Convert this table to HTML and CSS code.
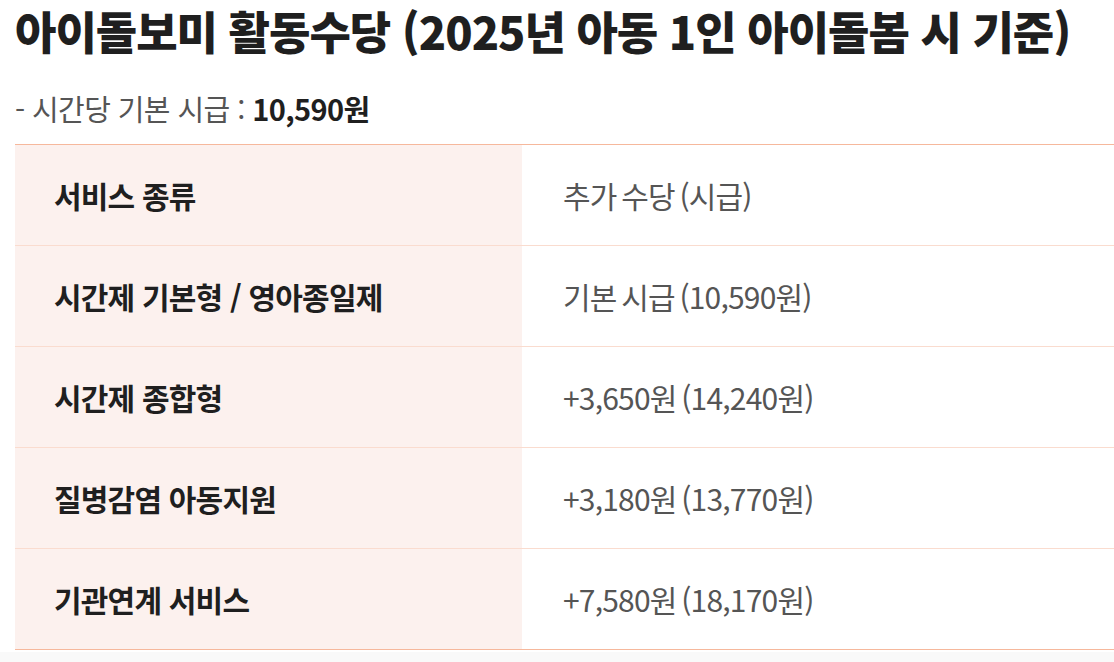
FILE: index.html
```html
<!DOCTYPE html>
<html lang="ko">
<head>
<meta charset="utf-8">
<link rel="stylesheet" href="styles.css">
</head>
<body>
<div class="page">
  <section class="content">
    <h1 class="title">아이돌보미 활동수당 (2025년 아동 1인 아이돌봄 시 기준)</h1>
    <p class="sub">- 시간당 기본 시급 : <strong>10,590원</strong></p>
    <table class="pay">
      <tbody>
        <tr><th>서비스 종류</th><td>추가 수당 (시급)</td></tr>
        <tr><th>시간제 기본형 / 영아종일제</th><td>기본 시급 (10,590원)</td></tr>
        <tr><th>시간제 종합형</th><td>+3,650원 (14,240원)</td></tr>
        <tr><th>질병감염 아동지원</th><td>+3,180원 (13,770원)</td></tr>
        <tr><th>기관연계 서비스</th><td>+7,580원 (18,170원)</td></tr>
      </tbody>
    </table>
  </section>
  <div class="footer-band"></div>
</div>
</body>
</html>
```

FILE: styles.css
```css
html, body {
  margin: 0;
  padding: 0;
  background: #ffffff;
}
body {
  font-family: "Noto Sans CJK KR", "Noto Sans", sans-serif;
  color: #222222;
}
.page {
  width: 1114px;
  min-height: 662px;
  display: flex;
  flex-direction: column;
}
.content {
  padding: 0 0 0 15px;
}
.title {
  margin: 0;
  font-size: 45px;
  line-height: 62px;
  font-weight: 800;
  letter-spacing: -1px;
  color: #1f1f1f;
}
.sub {
  margin: 26px 0 0;
  font-size: 29px;
  line-height: 40px;
  color: #555555;
  letter-spacing: -0.6px;
}
.sub strong {
  color: #1f1f1f;
  font-weight: 700;
}
.pay {
  margin-top: 16px;
  width: 1099px;
  border-collapse: collapse;
  border-top: 1px solid #f6b89c;
  border-bottom: 1px solid #f6b89c;
}
.pay tr + tr th,
.pay tr + tr td {
  border-top: 1px solid #fadccf;
}
.pay th,
.pay td {
  height: 101px;
  padding: 0;
  text-align: left;
  font-size: 30px;
  letter-spacing: -0.8px;
  box-sizing: border-box;
}
.pay th {
  width: 507px;
  background: #fcf1ee;
  font-weight: 700;
  color: #1f1f1f;
  padding-left: 39px;
}
.pay td {
  font-weight: 400;
  color: #555555;
  padding-left: 41px;
  word-spacing: -3px;
}
.footer-band {
  flex: 1;
  margin-top: 2px;
  background: #f9f9f9;
}
```
